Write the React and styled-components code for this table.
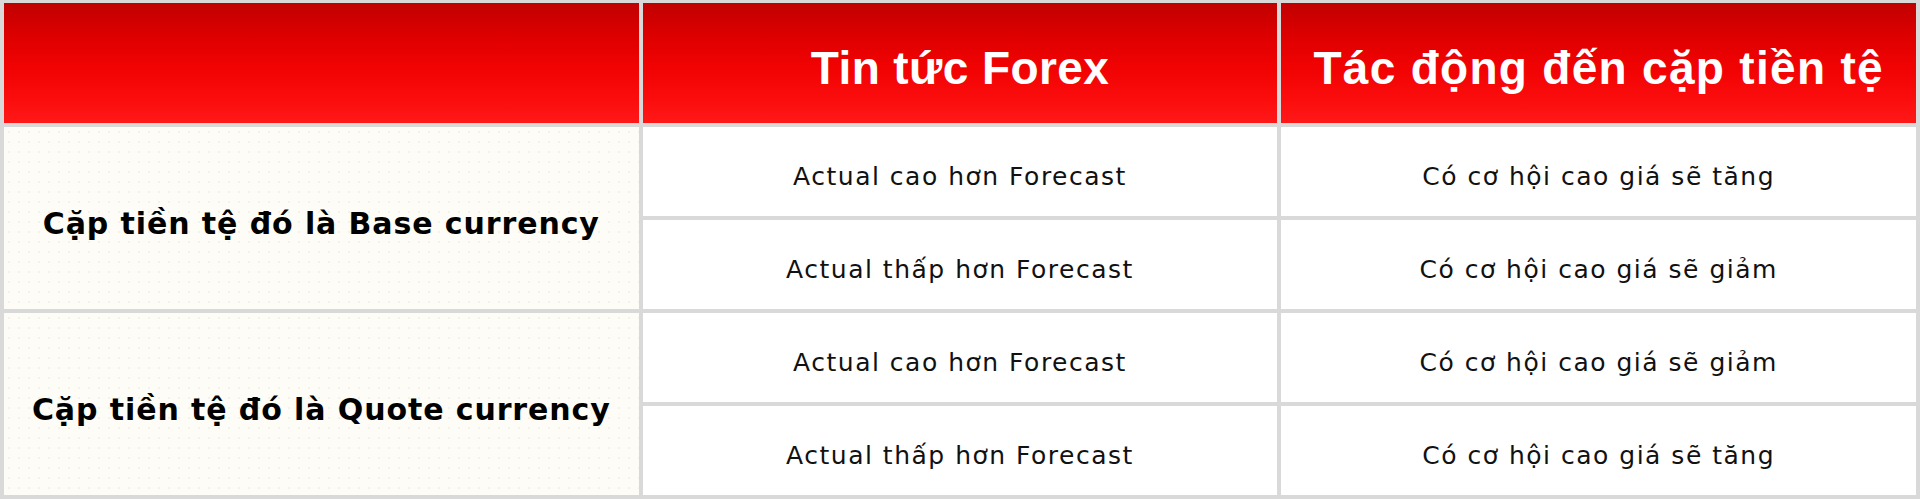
import React from "react";
import styled, { createGlobalStyle } from "styled-components";

const Global = createGlobalStyle`
  html, body { margin: 0; padding: 0; background: #ffffff; }
  body { font-family: "DejaVu Sans", "Liberation Sans", sans-serif; }
`;

const Table = styled.div`
  display: grid;
  grid-template-columns: repeat(3, 1fr);
  grid-template-rows: 120px repeat(4, 89px);
  gap: 4px;
  padding: 3px 4px 4px;
  background: #d9d9d9;
  width: 1920px;
  box-sizing: border-box;
`;

const HeadCell = styled.div`
  display: flex;
  align-items: center;
  justify-content: center;
  padding-top: 10px;
  box-sizing: border-box;
  background: linear-gradient(180deg, #c10000 0%, #e00000 30%, #f20303 55%, #fb0d0d 80%, #ff1818 100%);
  color: #ffffff;
  font-family: "Liberation Sans", Arial, sans-serif;
  font-weight: 700;
  font-size: 46px;
  letter-spacing: ${(p) => p.$spacing || "0.4px"};
`;

const GroupCell = styled.div`
  display: flex;
  align-items: center;
  justify-content: center;
  padding-top: 10px;
  box-sizing: border-box;
  background-color: #fdfcf6;
  background-image: radial-gradient(circle, rgba(120, 110, 80, 0.07) 0.8px, transparent 1.3px);
  background-size: 10px 10px;
  color: #000000;
  font-family: "DejaVu Sans", sans-serif;
  font-weight: 700;
  font-size: 30px;
  letter-spacing: 0.9px;
`;

const Cell = styled.div`
  display: flex;
  align-items: center;
  justify-content: center;
  padding-top: 9px;
  box-sizing: border-box;
  background: #ffffff;
  color: #111111;
  font-family: "DejaVu Sans", sans-serif;
  font-weight: 400;
  font-size: 25px;
  letter-spacing: 1.5px;
`;

const groups = [
  {
    label: "Cặp tiền tệ đó là Base currency",
    rows: [
      ["Actual cao hơn Forecast", "Có cơ hội cao giá sẽ tăng"],
      ["Actual thấp hơn Forecast", "Có cơ hội cao giá sẽ giảm"],
    ],
  },
  {
    label: "Cặp tiền tệ đó là Quote currency",
    rows: [
      ["Actual cao hơn Forecast", "Có cơ hội cao giá sẽ giảm"],
      ["Actual thấp hơn Forecast", "Có cơ hội cao giá sẽ tăng"],
    ],
  },
];

export default function App() {
  return (
    <>
      <Global />
      <Table>
        <HeadCell />
        <HeadCell>Tin tức Forex</HeadCell>
        <HeadCell $spacing="1.3px">Tác động đến cặp tiền tệ</HeadCell>
        {groups.map((g, gi) => (
          <React.Fragment key={gi}>
            <GroupCell style={{ gridRow: `${2 + gi * 2} / span 2`, gridColumn: 1 }}>
              {g.label}
            </GroupCell>
            {g.rows.map((r, ri) => (
              <React.Fragment key={ri}>
                <Cell style={{ gridRow: 2 + gi * 2 + ri, gridColumn: 2 }}>{r[0]}</Cell>
                <Cell style={{ gridRow: 2 + gi * 2 + ri, gridColumn: 3 }}>{r[1]}</Cell>
              </React.Fragment>
            ))}
          </React.Fragment>
        ))}
      </Table>
    </>
  );
}
